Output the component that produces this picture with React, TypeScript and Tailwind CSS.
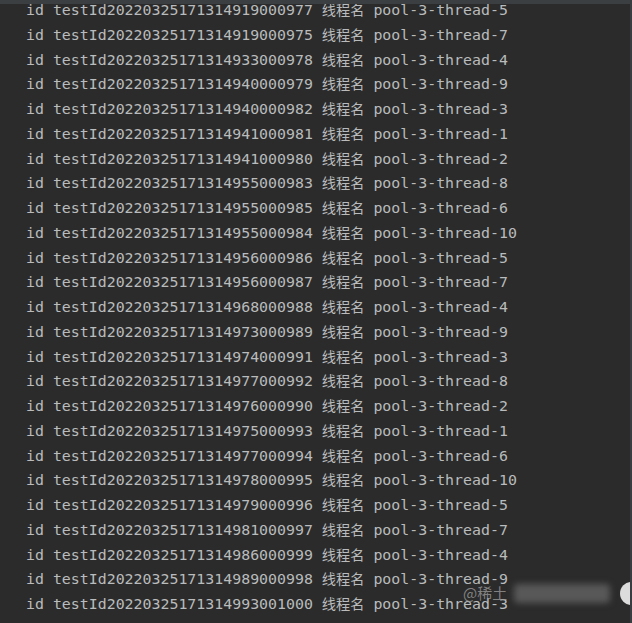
const rows: [string, string][] = [
  ["20220325171314919000977", "5"],
  ["20220325171314919000975", "7"],
  ["20220325171314933000978", "4"],
  ["20220325171314940000979", "9"],
  ["20220325171314940000982", "3"],
  ["20220325171314941000981", "1"],
  ["20220325171314941000980", "2"],
  ["20220325171314955000983", "8"],
  ["20220325171314955000985", "6"],
  ["20220325171314955000984", "10"],
  ["20220325171314956000986", "5"],
  ["20220325171314956000987", "7"],
  ["20220325171314968000988", "4"],
  ["20220325171314973000989", "9"],
  ["20220325171314974000991", "3"],
  ["20220325171314977000992", "8"],
  ["20220325171314976000990", "2"],
  ["20220325171314975000993", "1"],
  ["20220325171314977000994", "6"],
  ["20220325171314978000995", "10"],
  ["20220325171314979000996", "5"],
  ["20220325171314981000997", "7"],
  ["20220325171314986000999", "4"],
  ["20220325171314989000998", "9"],
  ["20220325171314993001000", "3"],
];

export default function App() {
  return (
    <div className="relative w-[632px] h-[623px] overflow-hidden bg-[#2b2b2b] border-r-2 border-[#3a3d3f]">
      {/* top toolbar edge */}
      <div className="absolute top-0 left-0 right-0 h-[4px] bg-[#3c3f41] z-10" />

      <div
        className="-mt-[2px] pl-[26px] text-[14.9px] leading-[24.75px] text-[#b9bbbc] whitespace-pre"
        style={{ fontFamily: "'DejaVu Sans Mono', 'Noto Sans CJK SC', monospace" }}
      >
        {rows.map(([id, n], i) => (
          <div key={i}>
            id testId{id} <span className="text-[14.2px]">线程名</span> pool-3-thread-{n}
          </div>
        ))}
      </div>

      {/* watermark */}
      <div
        className="absolute left-[463px] top-[582px] text-[15px] text-[#9a9a9a]/80"
        style={{ fontFamily: "'Noto Sans CJK SC', sans-serif" }}
      >
        @稀土
      </div>
      <div className="absolute left-[514px] top-[584px] w-[96px] h-[19px] rounded bg-[#585858] blur-[3px]" />
      <div className="absolute left-[620px] top-[582px] w-[24px] h-[23px] rounded-full bg-[#dcdcdc]" />
    </div>
  );
}
